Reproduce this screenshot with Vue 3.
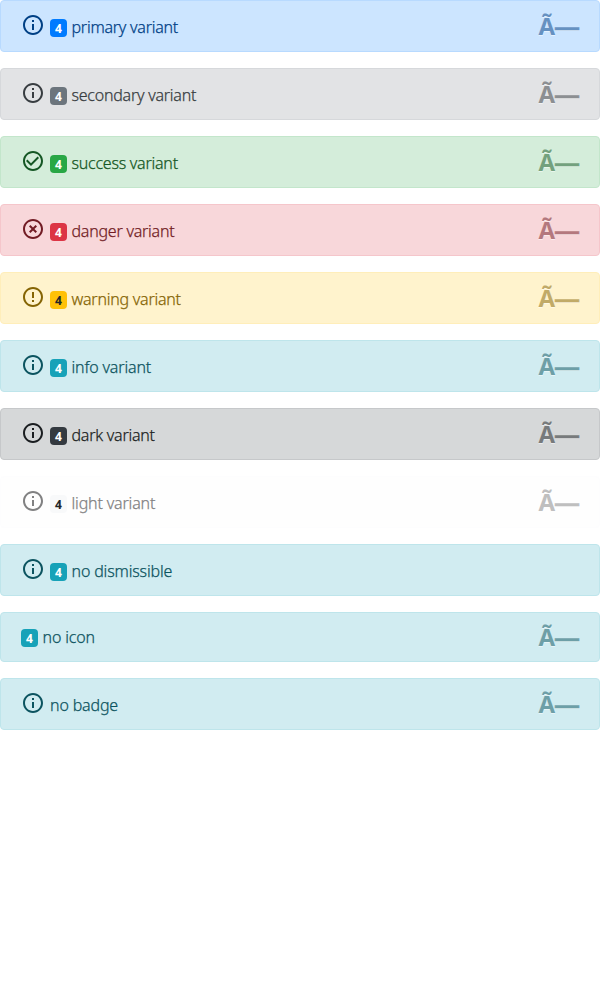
<script setup>
const info = 'M11 17h2v-6h-2v6zm1-15C6.48 2 2 6.48 2 12s4.48 10 10 10 10-4.48 10-10S17.52 2 12 2zm0 18c-4.41 0-8-3.59-8-8s3.59-8 8-8 8 3.59 8 8-3.59 8-8 8zM11 9h2V7h-2v2z'
const check = 'M16.59 7.58L10 14.17l-3.59-3.58L5 12l5 5 8-8zM12 2C6.48 2 2 6.48 2 12s4.48 10 10 10 10-4.48 10-10S17.52 2 12 2zm0 18c-4.42 0-8-3.58-8-8s3.58-8 8-8 8 3.58 8 8-3.58 8-8 8z'
const cancel = 'M14.59 8L12 10.59 9.41 8 8 9.41 10.59 12 8 14.59 9.41 16 12 13.41 14.59 16 16 14.59 13.41 12 16 9.41 14.59 8zM12 2C6.47 2 2 6.47 2 12s4.47 10 10 10 10-4.47 10-10S17.53 2 12 2zm0 18c-4.41 0-8-3.59-8-8s3.59-8 8-8 8 3.59 8 8-3.59 8-8 8z'
const error = 'M11 15h2v2h-2zm0-8h2v6h-2zm.99-5C6.47 2 2 6.48 2 12s4.47 10 9.99 10C17.52 22 22 17.52 22 12S17.52 2 11.99 2zM12 20c-4.42 0-8-3.58-8-8s3.58-8 8-8 8 3.58 8 8-3.58 8-8 8z'
const alerts = [
  { variant: 'primary', text: 'primary variant', icon: info, badge: true, close: true },
  { variant: 'secondary', text: 'secondary variant', icon: info, badge: true, close: true },
  { variant: 'success', text: 'success variant', icon: check, badge: true, close: true },
  { variant: 'danger', text: 'danger variant', icon: cancel, badge: true, close: true },
  { variant: 'warning', text: 'warning variant', icon: error, badge: true, close: true },
  { variant: 'info', text: 'info variant', icon: info, badge: true, close: true },
  { variant: 'dark', text: 'dark variant', icon: info, badge: true, close: true },
  { variant: 'light', text: 'light variant', icon: info, badge: true, close: true },
  { variant: 'info', text: 'no dismissible', icon: info, badge: true },
  { variant: 'info', text: 'no icon', badge: true, close: true },
  { variant: 'info', text: 'no badge', icon: info, close: true },
]
</script>

<template>
  <main>
    <div v-for="a in alerts" :key="a.text" class="alert" :class="[a.variant, { plain: !a.icon }]" role="alert">
      <svg v-if="a.icon" class="icon" viewBox="0 0 24 24"><path :d="a.icon" /></svg>
      <span v-if="a.badge" class="badge">4</span>
      <span class="label">{{ a.text }}</span>
      <button v-if="a.close" class="close" type="button">Ã<span class="dash">—</span></button>
    </div>
  </main>
</template>

<style>
body { margin: 0; background: #fff; }
</style>

<style scoped>
main { font: 16px/24px "Noto Sans", sans-serif; display: flex; flex-direction: column; gap: 16px; }
.alert { box-sizing: border-box; height: 52px; display: flex; align-items: center; padding: 2px 20px 0; border: 1px solid; border-radius: 4px; }
.alert.plain { height: 50px; padding-top: 0; }
.icon { width: 24px; height: 24px; margin: -4px 5px 0 0; fill: currentColor; }
.badge { box-sizing: border-box; width: 17px; height: 18px; margin: 1px 4.5px 0 0; border-radius: 4px; font-size: 12px; line-height: 19px; font-weight: 700; text-align: center; color: #fff; }
.label { white-space: pre; font-weight: 300; letter-spacing: -.24px; -webkit-text-stroke: .25px currentColor; }
.info .label, .light .label { letter-spacing: -.16px; }
.close { margin: -2px 0 0 auto; padding: 0; border: 0; background: none; font: 700 24px/24px "Noto Sans", sans-serif; color: inherit; opacity: .5; text-shadow: 0 1px 0 #fff; }
.plain .close { margin-top: 1px; }
.dash { font-family: "Liberation Sans", sans-serif; -webkit-text-stroke: .5px currentColor; }
.primary { color: #004085; background: #cce5ff; border-color: #b8daff; }
.primary .badge { background: #007bff; }
.secondary { color: #383d41; background: #e2e3e5; border-color: #d6d8db; }
.secondary .badge { background: #6c757d; }
.success { color: #155724; background: #d4edda; border-color: #c3e6cb; }
.success .badge { background: #28a745; }
.danger { color: #721c24; background: #f8d7da; border-color: #f5c6cb; }
.danger .badge { background: #dc3545; }
.warning { color: #856404; background: #fff3cd; border-color: #ffeeba; }
.warning .badge { background: #ffc107; color: #212529; }
.info { color: #0c5460; background: #d1ecf1; border-color: #bee5eb; }
.info .badge { background: #17a2b8; }
.dark { color: #1b1e21; background: #d6d8d9; border-color: #c6c8ca; }
.dark .badge { background: #343a40; }
.light { color: #818182; background: #fefefe; border-color: #fdfdfe; }
.light .badge { background: #f8f9fa; color: #212529; }
</style>
